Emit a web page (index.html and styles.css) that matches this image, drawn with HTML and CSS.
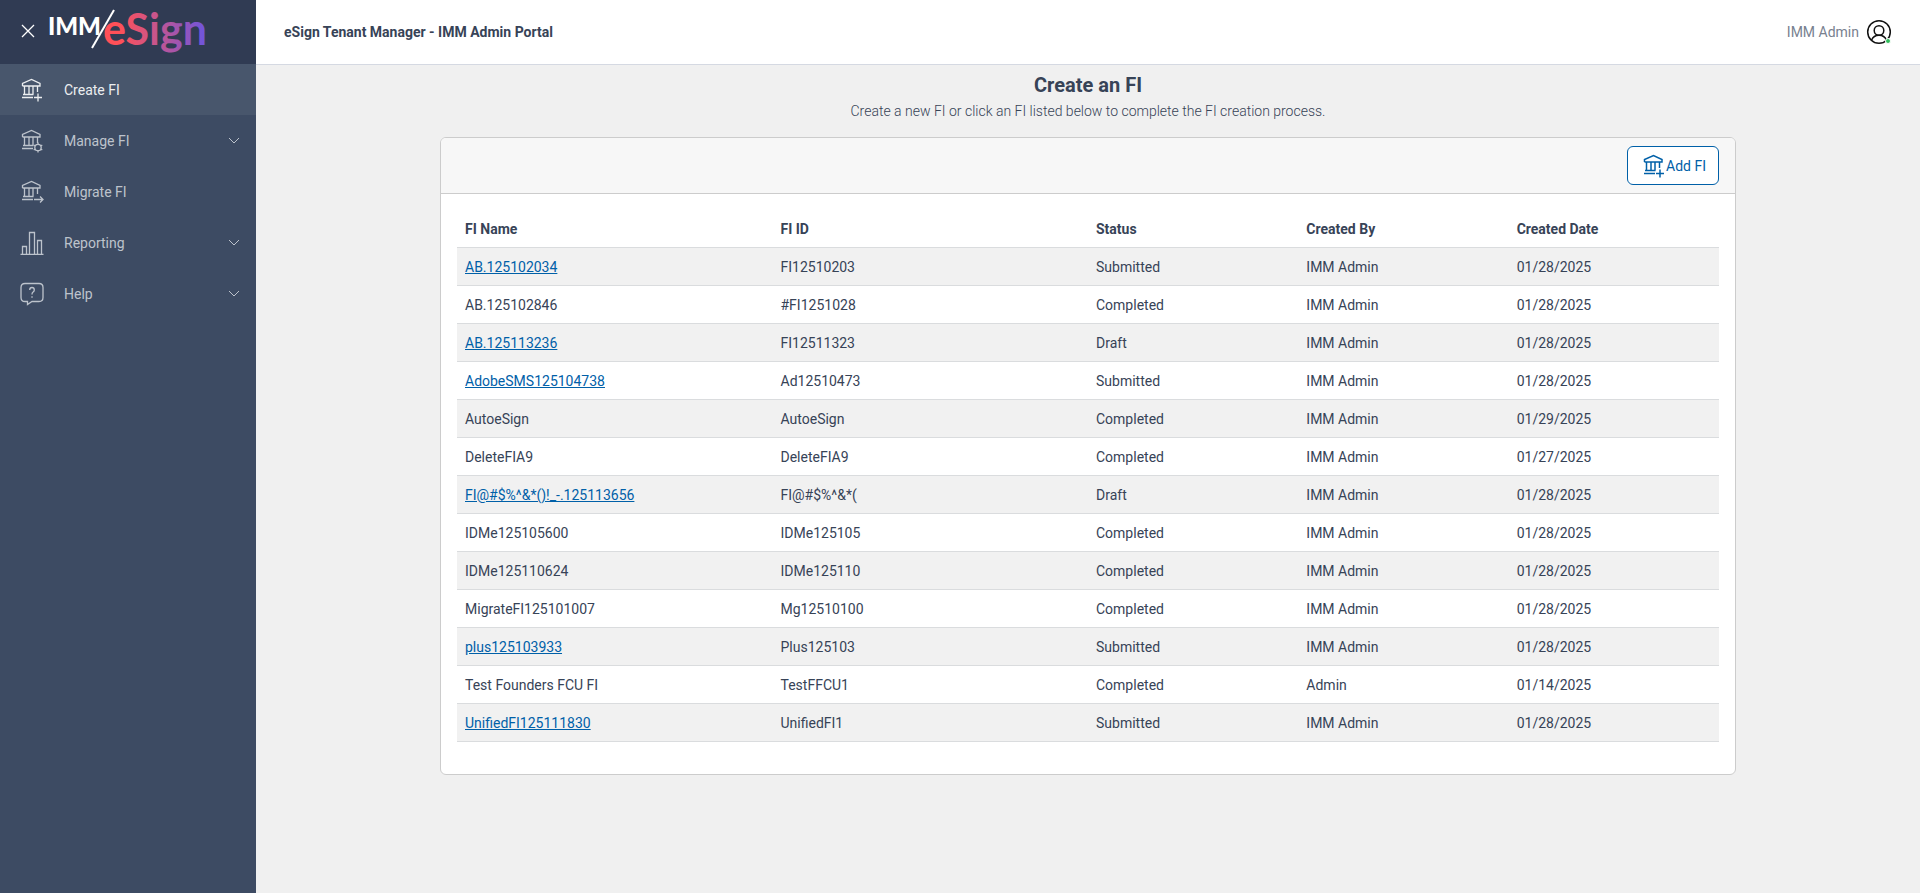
FILE: index.html
```
<!DOCTYPE html>
<html lang="en">
<head>
  <meta charset="UTF-8" />
  <title>eSign Tenant Manager - IMM Admin Portal</title>
  <meta name="viewport" content="width=device-width, initial-scale=1.0"/>
  <link rel="stylesheet" href="styles.css">
</head>
<body>

  <!-- shared icon shapes -->
  <svg class="symbols" aria-hidden="true">
    <symbol id="bank" viewBox="0 0 24 24">
      <path d="M2.500 8V5.500L11.500 1.500l8.500 4V8h-17.500M4.500 8v8.500M9 8v8.500M13 8v8.500M17.500 8v6M3 16.500h10.500M2 19.500h11"/>
    </symbol>
    <symbol id="chevron" viewBox="0 0 12 8">
      <path d="M1 1l5 5 5-5"/>
    </symbol>
  </svg>

  <div class="layout">
    <aside class="sidebar">
      <div class="brand">
        <button class="close-btn" aria-label="Close menu">
          <svg width="14" height="14" viewBox="0 0 14 14"><path d="M1 1l12 12M13 1L1 13"/></svg>
        </button>
        <svg class="logo" width="160" height="56" viewBox="0 0 160 56" role="img" aria-label="IMM eSign">
          <defs>
            <linearGradient id="logoFill" gradientUnits="userSpaceOnUse" x1="56" y1="0" x2="156" y2="0">
              <stop offset="0.150" stop-color="#ff5058"/>
              <stop offset="0.500" stop-color="#c9558c"/>
              <stop offset="1" stop-color="#6f55dc"/>
            </linearGradient>
          </defs>
          <text class="logo-imm" x="-1" y="32">IMM</text>
          <path class="logo-slash" d="M43 45L65 7"/>
          <text class="logo-esign" x="54" y="42" fill="url(#logoFill)">eSign</text>
        </svg>
      </div>

      <nav class="menu">
        <a href="#" class="menu-item active">
          <svg class="menu-icon" viewBox="0 0 24 24"><use href="#bank"/><path d="M18 15.500v8M14 19.500h8"/></svg>
          <span>Create FI</span>
        </a>
        <a href="#" class="menu-item">
          <svg class="menu-icon" viewBox="0 0 24 24"><use href="#bank"/><circle cx="18" cy="18.500" r="3.200"/><path d="M18 13.500v2M18 21.500v2M13.700 16l1.700 1M20.600 20l1.700 1M13.700 21l1.700-1M20.600 17l1.700-1"/></svg>
          <span>Manage FI</span>
          <svg class="chevron"><use href="#chevron"/></svg>
        </a>
        <a href="#" class="menu-item">
          <svg class="menu-icon" viewBox="0 0 24 24"><use href="#bank"/><path d="M14 19.500h9M20 16.500l3 3-3 3"/></svg>
          <span>Migrate FI</span>
        </a>
        <a href="#" class="menu-item">
          <svg class="menu-icon" viewBox="0 0 24 24"><path d="M.5 23.500h23M2.500 23v-7.500h4V23M9.500 23V1.500h5V23M17.500 23V9.500h4V23"/></svg>
          <span>Reporting</span>
          <svg class="chevron"><use href="#chevron"/></svg>
        </a>
        <a href="#" class="menu-item">
          <svg class="menu-icon" viewBox="0 0 24 24"><path d="M5 1.500h14q4 0 4 4v10q0 4-4 4h-7l-4.500 3v-3H5q-4 0-4-4v-10q0-4 4-4z"/><path d="M9.700 8q0-2.500 2.300-2.500T14.300 8q0 1.200-1.200 2T12 12.500M12 14.200v1.500"/></svg>
          <span>Help</span>
          <svg class="chevron"><use href="#chevron"/></svg>
        </a>
      </nav>
    </aside>

    <div class="content">
      <header class="topbar">
        <span class="topbar-title">eSign Tenant Manager - IMM Admin Portal</span>
        <button class="user-btn">
          IMM Admin
          <svg width="24" height="24" viewBox="0 0 24 24">
            <circle cx="12" cy="12" r="11.300"/>
            <circle cx="12" cy="10.500" r="4.800"/>
            <path d="M4.500 20.300q2-5 7.500-5t7.500 5"/>
            <circle class="online" cx="21" cy="21" r="2.500"/>
          </svg>
        </button>
      </header>

      <main class="page">
        <h1>Create an FI</h1>
        <p class="subtitle">Create a new FI or click an FI listed below to complete the FI creation process.</p>

        <section class="card">
          <div class="card-header">
            <button class="add-btn">
              <svg width="24" height="24" viewBox="0 0 24 24"><use href="#bank"/><path d="M18 15.500v8M14 19.500h8"/></svg>
              Add FI
            </button>
          </div>
          <div class="card-body">
            <table>
              <thead>
                <tr>
                  <th class="wide">FI Name</th>
                  <th class="wide">FI ID</th>
                  <th>Status</th>
                  <th>Created By</th>
                  <th>Created Date</th>
                </tr>
              </thead>
              <tbody>
                <tr><td><a href="#">AB.125102034</a></td><td>FI12510203</td><td>Submitted</td><td>IMM Admin</td><td>01/28/2025</td></tr>
                <tr><td>AB.125102846</td><td>#FI1251028</td><td>Completed</td><td>IMM Admin</td><td>01/28/2025</td></tr>
                <tr><td><a href="#">AB.125113236</a></td><td>FI12511323</td><td>Draft</td><td>IMM Admin</td><td>01/28/2025</td></tr>
                <tr><td><a href="#">AdobeSMS125104738</a></td><td>Ad12510473</td><td>Submitted</td><td>IMM Admin</td><td>01/28/2025</td></tr>
                <tr><td>AutoeSign</td><td>AutoeSign</td><td>Completed</td><td>IMM Admin</td><td>01/29/2025</td></tr>
                <tr><td>DeleteFIA9</td><td>DeleteFIA9</td><td>Completed</td><td>IMM Admin</td><td>01/27/2025</td></tr>
                <tr><td><a href="#">FI@#$%^&amp;*()!_-.125113656</a></td><td>FI@#$%^&amp;*(</td><td>Draft</td><td>IMM Admin</td><td>01/28/2025</td></tr>
                <tr><td>IDMe125105600</td><td>IDMe125105</td><td>Completed</td><td>IMM Admin</td><td>01/28/2025</td></tr>
                <tr><td>IDMe125110624</td><td>IDMe125110</td><td>Completed</td><td>IMM Admin</td><td>01/28/2025</td></tr>
                <tr><td>MigrateFI125101007</td><td>Mg12510100</td><td>Completed</td><td>IMM Admin</td><td>01/28/2025</td></tr>
                <tr><td><a href="#">plus125103933</a></td><td>Plus125103</td><td>Submitted</td><td>IMM Admin</td><td>01/28/2025</td></tr>
                <tr><td>Test Founders FCU FI</td><td>TestFFCU1</td><td>Completed</td><td>Admin</td><td>01/14/2025</td></tr>
                <tr><td><a href="#">UnifiedFI125111830</a></td><td>UnifiedFI1</td><td>Submitted</td><td>IMM Admin</td><td>01/28/2025</td></tr>
              </tbody>
            </table>
          </div>
        </section>
      </main>
    </div>
  </div>

</body>
</html>
```
FILE: styles.css
```
* {
  box-sizing: border-box;
}
body {
  margin: 0;
  font-family: Roboto, sans-serif;
  font-size: 14px;
  line-height: 21px;
  color: #374357;
  background: #f0f0f0;
}
button {
  font: inherit;
  cursor: pointer;
}
svg {
  fill: none;
  stroke: currentColor;
  flex-shrink: 0;
}
.symbols {
  display: none;
}
.layout {
  display: flex;
  min-height: 100vh;
}

/* sidebar */
.sidebar {
  width: 256px;
  flex-shrink: 0;
  background: #3d4b63;
}
.brand {
  display: flex;
  align-items: center;
  height: 64px;
  padding: 0 0 2px 21px;
  background: #303b53;
}
.close-btn {
  display: flex;
  padding: 0;
  border: none;
  background: none;
  color: white;
}
.close-btn svg {
  stroke-width: 1.3;
}
.logo {
  margin-left: 14px;
  overflow: visible;
}
.logo-imm {
  font: 900 24px Lato, sans-serif;
  fill: white;
  stroke: none;
}
.logo-slash {
  stroke: white;
  stroke-width: 2;
}
.logo-esign {
  font: bold 43px Lato, sans-serif;
  stroke: none;
}
.menu-item {
  display: flex;
  align-items: center;
  height: 51px;
  padding: 1px 16px 0 20px;
  color: #bdc3cc;
  text-decoration: none;
}
.menu-item.active {
  background: #48566c;
  color: #eceef0;
}
.menu-icon {
  width: 24px;
  height: 24px;
  margin-right: 20px;
  stroke-width: 1.3;
}
.chevron {
  width: 12px;
  height: 8px;
  margin-left: auto;
}

/* top bar */
.content {
  flex: 1;
}
.topbar {
  display: flex;
  align-items: center;
  justify-content: space-between;
  height: 65px;
  padding: 0 29px 0 28px;
  background: white;
  border-bottom: 1px solid #d5d9e2;
}
.topbar-title {
  font-weight: bold;
}
.user-btn {
  display: flex;
  align-items: center;
  gap: 8px;
  padding: 0;
  border: none;
  background: none;
  color: #78818f;
}
.user-btn svg {
  color: #111;
  stroke-width: 1.5;
  overflow: visible;
}
.user-btn .online {
  fill: #2fbf5b;
  stroke: white;
  stroke-width: 1;
}

/* page */
.page {
  max-width: 1320px;
  margin: 0 auto;
  padding: 8px 12px;
}
h1 {
  margin: 0;
  font-size: 20px;
  line-height: 24px;
  text-align: center;
}
.subtitle {
  margin: 4px 0 15px;
  font-weight: 300;
  text-align: center;
}
.card {
  background: white;
  border: 1px solid #ccc;
  border-radius: 6px;
  overflow: hidden;
}
.card-header {
  display: flex;
  justify-content: flex-end;
  padding: 8px 16px;
  background: #f7f7f7;
  border-bottom: 1px solid #ccc;
}
.add-btn {
  display: flex;
  align-items: center;
  height: 39px;
  padding: 1px 12px 0 14px;
  border: 1px solid #0060a8;
  border-radius: 6px;
  background: white;
  color: #0060a8;
}
.add-btn svg {
  stroke-width: 1.5;
}
.card-body {
  padding: 16px 16px 32px;
}
table {
  width: 100%;
  table-layout: fixed;
  border-collapse: collapse;
}
th, td {
  padding: 9px 8px 7px;
  text-align: left;
  border-bottom: 1px solid #dadcde;
}
.wide {
  width: 25%;
}
tbody tr:nth-child(odd) {
  background: #f1f1f1;
}
td a {
  color: #0060a8;
}
```
